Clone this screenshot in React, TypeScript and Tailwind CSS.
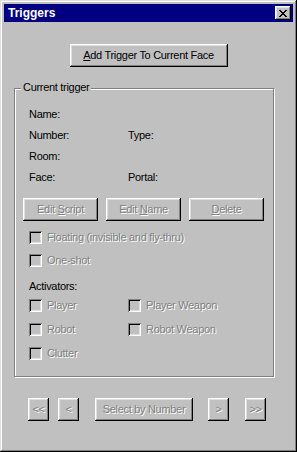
const raised =
  'shadow-[inset_-1px_-1px_#000,inset_1px_1px_#fff,inset_-2px_-2px_#808080,inset_2px_2px_#dfdfdf]';
const dim = 'text-[#808080] [text-shadow:1px_1px_0_#fff]';

const Btn = ({
  children,
  w,
  disabled,
}: {
  children: React.ReactNode;
  w: string;
  disabled?: boolean;
}) => (
  <button
    className={`${w} h-[23px] bg-[#c0c0c0] ${raised} flex items-center justify-center leading-[13px] ${
      disabled ? dim : 'text-black'
    }`}
  >
    {children}
  </button>
);

const Check = ({ label }: { label: string }) => (
  <div className="flex items-center gap-[5px] h-[13px]">
    <span className="w-[13px] h-[13px] shrink-0 bg-[#c0c0c0] shadow-[inset_1px_1px_#808080,inset_-1px_-1px_#fff,inset_2px_2px_#000,inset_-2px_-2px_#dfdfdf]" />
    <span className={`leading-[13px] ${dim}`}>{label}</span>
  </div>
);

const CloseGlyph = () => (
  <svg width="8" height="7" viewBox="0 0 8 7" shapeRendering="crispEdges">
    <path
      fill="#000"
      d="M0 0h2v1H0zM6 0h2v1H6zM1 1h2v1H1zM5 1h2v1H5zM2 2h4v1H2zM3 3h2v1H3zM2 4h4v1H2zM1 5h2v1H1zM5 5h2v1H5zM0 6h2v1H0zM6 6h2v1H6z"
    />
  </svg>
);

export default function App() {
  return (
    <div className="w-[297px] h-[452px] bg-[#c0c0c0] p-[4px] font-['Liberation_Sans',Arial,sans-serif] text-[11px] tracking-[-0.3px] text-black shadow-[inset_-1px_-1px_#000,inset_1px_1px_#dfdfdf,inset_-2px_-2px_#808080,inset_2px_2px_#fff]">
      {/* title bar */}
      <div className="h-[18px] bg-[#000080] flex items-center justify-between pl-[4px] pr-[2px]">
        <span className="text-white font-bold text-[12px] tracking-normal leading-[18px]">Triggers</span>
        <button className={`w-[16px] h-[14px] bg-[#c0c0c0] ${raised} flex items-center justify-center`}>
          <CloseGlyph />
        </button>
      </div>

      <div className="flex flex-col">
        <div className="mt-[22px] flex justify-center">
          <Btn w="w-[158px]">
            <span>
              <u>A</u>dd Trigger To Current Face
            </span>
          </Btn>
        </div>

        {/* group box */}
        <div className="relative mt-[21px] ml-[10px] w-[260px] h-[289px] border border-[#808080] shadow-[inset_1px_1px_#fff,1px_1px_#fff]">
          <span className="absolute left-[6px] -top-[8px] px-[2px] bg-[#c0c0c0] leading-[13px]">
            Current trigger
          </span>

          <div className="flex flex-col pl-[14px] pt-[19px]">
            <div className="flex h-[13px] leading-[13px]">
              <span className="w-[99px]">Name:</span>
            </div>
            <div className="flex h-[13px] leading-[13px] mt-[8px]">
              <span className="w-[99px]">Number:</span>
              <span>Type:</span>
            </div>
            <div className="flex h-[13px] leading-[13px] mt-[8px]">
              <span className="w-[99px]">Room:</span>
            </div>
            <div className="flex h-[13px] leading-[13px] mt-[8px]">
              <span className="w-[99px]">Face:</span>
              <span>Portal:</span>
            </div>

            <div className="flex gap-[8px] mt-[14px] -ml-[6px]">
              <Btn w="w-[75px]" disabled>
                <span>
                  Edit <u>S</u>cript
                </span>
              </Btn>
              <Btn w="w-[75px]" disabled>
                <span>
                  Edit <u>N</u>ame
                </span>
              </Btn>
              <Btn w="w-[75px]" disabled>
                <span>
                  <u>D</u>elete
                </span>
              </Btn>
            </div>

            <div className="mt-[10px]">
              <Check label="Floating (invisible and fly-thru)" />
            </div>
            <div className="mt-[10px]">
              <Check label="One-shot" />
            </div>

            <div className="mt-[13px] h-[13px] leading-[13px]">Activators:</div>

            <div className="flex mt-[6px]">
              <div className="w-[99px]">
                <Check label="Player" />
              </div>
              <Check label="Player Weapon" />
            </div>
            <div className="flex mt-[11px]">
              <div className="w-[99px]">
                <Check label="Robot" />
              </div>
              <Check label="Robot Weapon" />
            </div>
            <div className="flex mt-[11px]">
              <Check label="Clutter" />
            </div>
          </div>
        </div>

        {/* navigation */}
        <div className="flex mt-[21px] ml-[24px]">
          <Btn w="w-[21px]" disabled>
            &lt;&lt;
          </Btn>
          <div className="ml-[9px]">
            <Btn w="w-[21px]" disabled>
              &lt;
            </Btn>
          </div>
          <div className="ml-[16px]">
            <Btn w="w-[98px]" disabled>
              Select by Number
            </Btn>
          </div>
          <div className="ml-[15px]">
            <Btn w="w-[21px]" disabled>
              &gt;
            </Btn>
          </div>
          <div className="ml-[16px]">
            <Btn w="w-[21px]" disabled>
              &gt;&gt;
            </Btn>
          </div>
        </div>
      </div>
    </div>
  );
}
